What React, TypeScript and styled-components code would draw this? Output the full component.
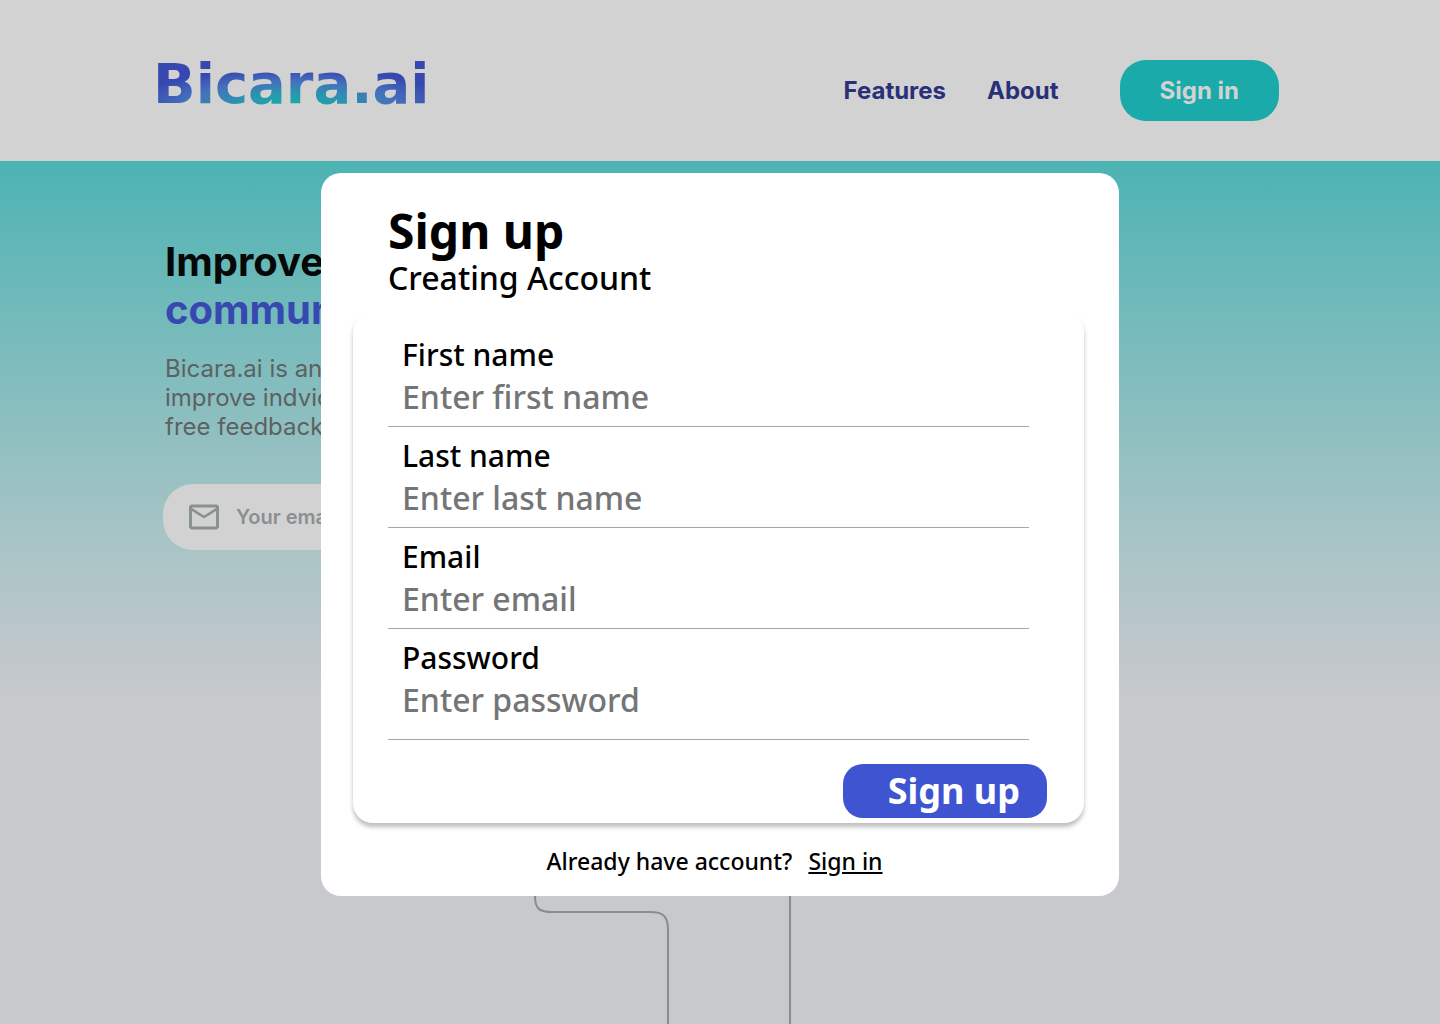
import React from "react";
import styled, { createGlobalStyle } from "styled-components";

const GlobalStyle = createGlobalStyle`
  *, *::before, *::after { box-sizing: border-box; }
  body { margin: 0; background: #c8c9cd; font-family: Inter, "Liberation Sans", sans-serif; }
  h1, h2, p { margin: 0; }
  a { color: inherit; text-decoration: none; }
  button, input { font: inherit; border: 0; }
`;

const Page = styled.div`
  display: flex;
  flex-direction: column;
  min-height: 100vh;
`;

const Header = styled.header`
  display: flex;
  align-items: flex-start;
  justify-content: space-between;
  padding: 60px 161px 40px 153px;
  background: #d2d2d2;
`;

const Logo = styled.a`
  font: 700 56px/48px "DejaVu Sans", sans-serif;
  color: transparent;
  background: radial-gradient(ellipse 56% 70% at 50% 90%, #16aaa9 0%, #2798ae 28%, #4570bb 66%, #3749b0 100%);
  background-clip: text;
  -webkit-background-clip: text;
`;

const Nav = styled.nav`
  display: flex;
  align-items: center;
  gap: 41px;
  font-size: 24px;
  font-weight: 700;
  color: #292f78;
`;

const SignInButton = styled.button`
  height: 61px;
  margin-left: 20px;
  padding: 0 40px;
  border-radius: 26px;
  background: #1aaaaa;
  color: #d2d2d2;
`;

const Hero = styled.main`
  min-height: 559px;
  padding: 77px 163px 0;
  background: linear-gradient(#4db3b3, #8fbfc0 48%, #a8c4c6 68%, #c8c9cd 96%);
`;

const HeroTitle = styled.h1`
  padding-left: 2px;
  font-size: 40px;
  line-height: 48px;
  font-weight: 700;
  color: #060707;
`;

const Accent = styled.span`
  display: block;
  color: #3749b0;
`;

const HeroText = styled.p`
  padding: 20px 0 0 2px;
  font-size: 24px;
  line-height: 29px;
  color: #5d6162;
`;

const EmailBox = styled.label`
  display: flex;
  align-items: center;
  gap: 14px;
  width: 480px;
  height: 66px;
  margin-top: 43px;
  padding: 0 23px;
  border-radius: 30px;
  background: #d2d2d2;
  color: #899091;
`;

const EmailInput = styled.input`
  flex: 1;
  padding: 0;
  background: transparent;
  font-size: 20px;
  font-weight: 600;
  &::placeholder { color: #899091; opacity: 1; }
`;

const Connectors = styled.section`
  display: flex;
  flex: 1;
  justify-content: center;
  background: #c8c9cd;
`;

const Backdrop = styled.div`
  position: absolute;
  inset: 0;
  display: flex;
  justify-content: center;
  align-items: flex-start;
  padding-top: 173px;
`;

const Dialog = styled.section`
  width: 798px;
  max-width: 100%;
  padding: 31px 35px 19px 32px;
  border-radius: 20px;
  background: #fff;
  color: #000;
  font-family: "Noto Sans", "Open Sans", sans-serif;
  font-weight: 500;
`;

const DialogTitle = styled.h2`
  padding-left: 35px;
  font-size: 48px;
  line-height: 54px;
  font-weight: 700;
`;

const Subtitle = styled.p`
  padding-left: 35px;
  font-size: 32px;
  line-height: 40px;
`;

const Form = styled.form`
  display: flex;
  flex-direction: column;
  margin-top: 14px;
  padding: 14px 37px 5px 35px;
  border-radius: 20px;
  box-shadow: 0 4px 4px rgba(0, 0, 0, 0.25);
`;

const Field = styled.div<{ $last?: boolean }>`
  display: flex;
  flex-direction: column;
  margin-right: 18px;
  padding: 9px 14px ${(p) => (p.$last ? 19 : 9)}px;
  border-bottom: 1px solid #a3a9a9;
`;

const Label = styled.label`
  font-size: 30px;
  line-height: 40px;
`;

const Input = styled.input`
  width: 100%;
  height: 42px;
  padding: 0;
  background: transparent;
  font-size: 32px;
  &::placeholder { color: #747576; opacity: 1; }
`;

const SubmitButton = styled.button`
  align-self: flex-end;
  height: 54px;
  margin-top: 24px;
  padding: 0 27px 0 45px;
  border-radius: 20px;
  background: #3f54d1;
  color: #fff;
  font-size: 36px;
  font-weight: 700;
  line-height: 54px;
`;

const Footer = styled.div`
  display: flex;
  justify-content: center;
  gap: 16px;
  padding: 22px 8px 0 0;
  font-size: 23px;
  line-height: 32px;
`;

const FooterLink = styled.a`
  text-decoration: underline;
`;

const fields = [
  { id: "first", label: "First name", hint: "Enter first name", type: "text" },
  { id: "last", label: "Last name", hint: "Enter last name", type: "text" },
  { id: "email", label: "Email", hint: "Enter email", type: "email" },
  { id: "password", label: "Password", hint: "Enter password", type: "password" },
];

export default function App() {
  return (
    <>
      <GlobalStyle />
      <Page>
        <Header>
          <Logo href="#">Bicara.ai</Logo>
          <Nav>
            <a href="#features">Features</a>
            <a href="#about">About</a>
            <SignInButton type="button">Sign in</SignInButton>
          </Nav>
        </Header>
        <Hero>
          <HeroTitle>
            Improve
            <Accent>commun</Accent>
          </HeroTitle>
          <HeroText>
            Bicara.ai is an
            <br />
            improve indvid
            <br />
            free feedback
          </HeroText>
          <EmailBox>
            <svg width="36" height="36" viewBox="0 0 24 24" fill="currentColor" aria-hidden="true">
              <path d="M20 3.700H4c-1.100 0-2 .9-2 2v12.600c0 1.100.9 2 2 2h16c1.100 0 2-.9 2-2V5.700c0-1.100-.9-2-2-2zm0 14.600H4V8l8 5 8-5v10.300zM12 11 4 6v-.3h16V6l-8 5z" />
            </svg>
            <EmailInput type="email" placeholder="Your email" />
          </EmailBox>
        </Hero>
        <Connectors>
          <svg width="1440" height="304" viewBox="0 0 1440 304" fill="none" stroke="#8b8c8c" strokeWidth="2" aria-hidden="true">
            <path d="M535 160V176C535 189 539 192 553 192H650C663 192 668 196 668 210V304" />
            <path d="M790 160V304" />
          </svg>
        </Connectors>
      </Page>
      <Backdrop>
        <Dialog role="dialog" aria-labelledby="signup-title">
          <DialogTitle id="signup-title">Sign up</DialogTitle>
          <Subtitle>Creating Account</Subtitle>
          <Form>
            {fields.map((f, i) => (
              <Field key={f.id} $last={i === fields.length - 1}>
                <Label htmlFor={f.id}>{f.label}</Label>
                <Input id={f.id} type={f.type} placeholder={f.hint} />
              </Field>
            ))}
            <SubmitButton type="submit">Sign up</SubmitButton>
          </Form>
          <Footer>
            <span>Already have account?</span>
            <FooterLink href="#signin">Sign in</FooterLink>
          </Footer>
        </Dialog>
      </Backdrop>
    </>
  );
}
